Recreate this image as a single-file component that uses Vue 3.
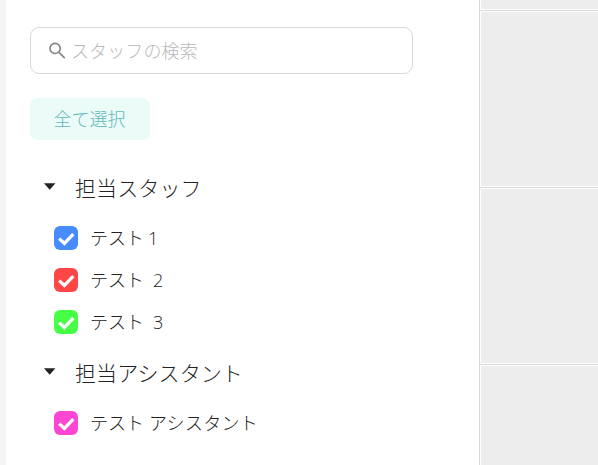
<template>
  <div class="page">
    <aside class="panel">
      <label class="search">
        <svg class="search-icon" viewBox="0 0 18 18">
          <circle cx="6.1" cy="6.4" r="5.1" />
          <path d="M9.8 10.2L15.8 16.2" />
        </svg>
        <input type="text" placeholder="スタッフの検索" />
      </label>
      <button class="select-all" @click="selectAll">全て選択</button>
      <section v-for="group in groups" :key="group.name" class="group">
        <h3 class="group-title" @click="group.open = !group.open">
          <svg class="caret" :class="{ closed: !group.open }" viewBox="0 0 12 7"><path d="M0 .2h11.4L5.7 6.8z" /></svg>
          <span>{{ group.name }}</span>
        </h3>
        <ul v-if="group.open" class="list">
          <li v-for="s in group.staff" :key="s.name + s.suffix" class="item" @click="s.checked = !s.checked">
            <span class="box" :style="{ background: s.checked ? s.color : '#ddd' }">
              <svg v-if="s.checked" viewBox="0 0 24 24"><path d="M5.2 12.6L10.4 17.4L19.3 8.2" /></svg>
            </span>
            <span class="name">{{ s.name }}</span>
            <span :class="['suffix', s.kind]">{{ s.suffix }}</span>
          </li>
        </ul>
      </section>
    </aside>
    <div class="calendar">
      <div v-for="n in 4" :key="n" class="slot"><div class="fill"></div></div>
    </div>
  </div>
</template>

<script setup>
import { ref } from 'vue'

const groups = ref([
  {
    name: '担当スタッフ',
    open: true,
    staff: [
      { name: 'テスト', suffix: '1', kind: 'one', color: '#468cff', checked: true },
      { name: 'テスト', suffix: '2', kind: 'digit', color: '#ff4646', checked: true },
      { name: 'テスト', suffix: '3', kind: 'digit', color: '#46ff46', checked: true },
    ],
  },
  {
    name: '担当アシスタント',
    open: true,
    staff: [{ name: 'テスト', suffix: 'アシスタント', kind: 'word', color: '#ff46d2', checked: true }],
  },
])

function selectAll() {
  groups.value.forEach(g => g.staff.forEach(s => { s.checked = true }))
}
</script>

<style>
body { margin: 0; background: #fff; }
</style>

<style scoped>
.page {
  display: flex;
  box-sizing: border-box;
  width: 598px;
  height: 465px;
  overflow: hidden;
  border-left: 6px solid #f5f5f5;
  background: #fff;
  color: #222;
  font-family: "Noto Sans CJK JP", sans-serif;
  font-weight: 300;
}
.panel {
  box-sizing: border-box;
  width: 473px;
  flex: none;
  padding: 27px 66px 0 24px;
}
.search {
  display: flex;
  align-items: center;
  box-sizing: border-box;
  height: 47px;
  padding: 0 17px 0 18px;
  border: 1px solid #d9d9d9;
  border-radius: 9px;
}
.search-icon {
  width: 18px;
  height: 18px;
  flex: none;
  fill: none;
  stroke: #868686;
  stroke-width: 1.7;
}
.search input {
  flex: 1;
  min-width: 0;
  margin-left: 4px;
  padding: 0 0 1px;
  border: 0;
  outline: 0;
  background: none;
  font: inherit;
  font-size: 18px;
  letter-spacing: .1px;
}
.search input::placeholder { color: #b8b8b8; opacity: 1; }
.select-all {
  display: block;
  width: 120px;
  height: 42px;
  margin: 24px 0 29px;
  padding: 0 1px 2px 0;
  border: 0;
  border-radius: 8px;
  background: #ebfbf8;
  color: #5fb9b7;
  font: inherit;
  font-size: 18px;
  line-height: 40px;
}
.group { margin-bottom: 11px; }
.group-title {
  display: flex;
  align-items: center;
  height: 38px;
  margin: 0 0 10px;
  padding-left: 14px;
  font-size: 21px;
  font-weight: 300;
  line-height: 36px;
  letter-spacing: .1px;
}
.group-title span { height: 38px; }
.caret {
  width: 12px;
  height: 7px;
  margin: 0 19px 3px 0;
  fill: #222;
}
.caret.closed { transform: rotate(-90deg); }
.list {
  margin: 0;
  padding: 0 0 0 24px;
  list-style: none;
}
.item {
  display: flex;
  align-items: center;
  height: 42px;
  font-size: 18px;
  line-height: 40px;
}
.name,
.suffix { height: 42px; }
.box {
  width: 24px;
  height: 24px;
  margin-right: 12px;
  border-radius: 6px;
}
.box svg {
  display: block;
  fill: none;
  stroke: #fff;
  stroke-width: 3.3;
}
.word {
  margin-left: 5px;
  letter-spacing: .3px;
}
.one,
.digit {
  margin-left: 9px;
  font-family: "Open Sans", "Noto Sans CJK JP", sans-serif;
  line-height: 42px;
}
.one { margin-left: 4px; }
.calendar {
  flex: 1;
  margin-top: -167px;
  border-left: 1px solid #d9d9d9;
}
.slot {
  box-sizing: border-box;
  height: 177px;
  padding: 1px 0 1px 1px;
  border-top: 1px solid #d9d9d9;
}
.fill {
  height: 100%;
  background: #ededed;
}
</style>
